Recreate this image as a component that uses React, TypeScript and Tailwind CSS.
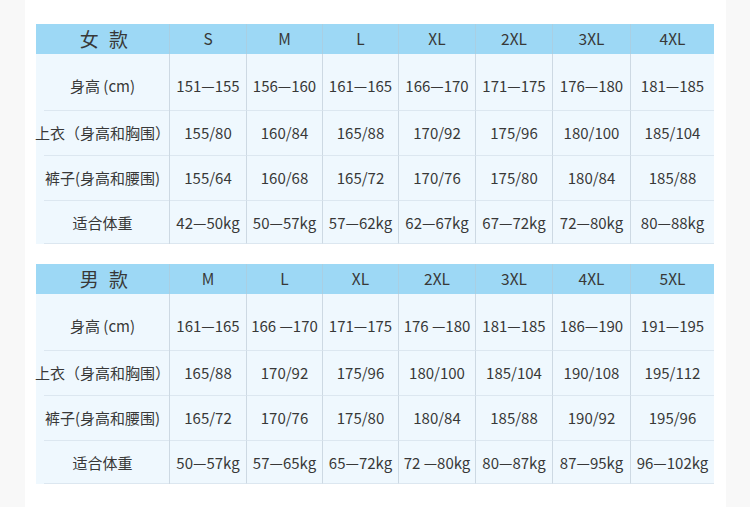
import React from "react";

const widths = [134, 77, 76, 76, 77, 77, 78, 83];

type TableData = {
  title: string;
  sizes: string[];
  rows: { label: string; values: string[] }[];
};

const women: TableData = {
  title: "女 款",
  sizes: ["S", "M", "L", "XL", "2XL", "3XL", "4XL"],
  rows: [
    { label: "身高 (cm)", values: ["151—155", "156—160", "161—165", "166—170", "171—175", "176—180", "181—185"] },
    { label: "上衣（身高和胸围）", values: ["155/80", "160/84", "165/88", "170/92", "175/96", "180/100", "185/104"] },
    { label: "裤子(身高和腰围)", values: ["155/64", "160/68", "165/72", "170/76", "175/80", "180/84", "185/88"] },
    { label: "适合体重", values: ["42—50kg", "50—57kg", "57—62kg", "62—67kg", "67—72kg", "72—80kg", "80—88kg"] },
  ],
};

const men: TableData = {
  title: "男 款",
  sizes: ["M", "L", "XL", "2XL", "3XL", "4XL", "5XL"],
  rows: [
    { label: "身高 (cm)", values: ["161—165", "166 —170", "171—175", "176 —180", "181—185", "186—190", "191—195"] },
    { label: "上衣（身高和胸围）", values: ["165/88", "170/92", "175/96", "180/100", "185/104", "190/108", "195/112"] },
    { label: "裤子(身高和腰围)", values: ["165/72", "170/76", "175/80", "180/84", "185/88", "190/92", "195/96"] },
    { label: "适合体重", values: ["50—57kg", "57—65kg", "65—72kg", "72 —80kg", "80—87kg", "87—95kg", "96—102kg"] },
  ],
};

const rowHeights = ["h-[57px]", "h-[45px]", "h-[45px]", "h-[43px]"];
const rowPads = ["pt-[9px]", "pt-0", "pt-0", "pt-[2px]"];

function SizeTable({ data }: { data: TableData }) {
  return (
    <div className="w-[678px] font-normal text-[#383838]">
      <div className="flex h-[30px] bg-[#9dd8f5]">
        {[data.title, ...data.sizes].map((t, i) => (
          <div
            key={i}
            style={{ width: widths[i] }}
            className={`flex items-center justify-center whitespace-nowrap ${
              i < 7 ? "border-r border-[#a9cfe3]" : ""
            } ${i === 0 ? "pl-[6px] text-[19px] tracking-[3px]" : "text-[15.5px]"}`}
          >
            {t}
          </div>
        ))}
      </div>
      <div className="bg-[#eff8fe]">
        {data.rows.map((r, ri) => (
          <div key={ri} className={`flex ${rowHeights[ri]}`}>
            <div
              style={{ width: widths[0] }}
              className="pl-[8px] border-r border-[#cdd9e3]"
            >
              <div
                className={`flex h-full w-full items-center justify-center border-b border-[#dce7f0] ${rowPads[ri]}`}
              >
                <span className="mr-[8px] whitespace-nowrap text-[15px]">{r.label}</span>
              </div>
            </div>
            {r.values.map((v, vi) => (
              <div
                key={vi}
                style={{ width: widths[vi + 1] }}
                className={`flex items-center justify-center whitespace-nowrap border-b border-[#dce7f0] text-[15px] ${
                  vi < 6 ? "border-r border-r-[#cdd9e3]" : ""
                } ${rowPads[ri]}`}
              >
                {v}
              </div>
            ))}
          </div>
        ))}
      </div>
    </div>
  );
}

export default function App() {
  return (
    <div
      className="flex h-[513px] w-[750px] bg-white"
      style={{ fontFamily: '"Noto Sans CJK SC", "Noto Sans", sans-serif' }}
    >
      <div className="h-[507px] w-[25px] bg-[#f8f8f8]" />
      <div className="flex w-[701px] flex-col gap-[20px] pl-[11px] pt-[24px]">
        <SizeTable data={women} />
        <SizeTable data={men} />
      </div>
      <div className="h-[507px] w-[24px] bg-[#f8f8f8]" />
    </div>
  );
}
